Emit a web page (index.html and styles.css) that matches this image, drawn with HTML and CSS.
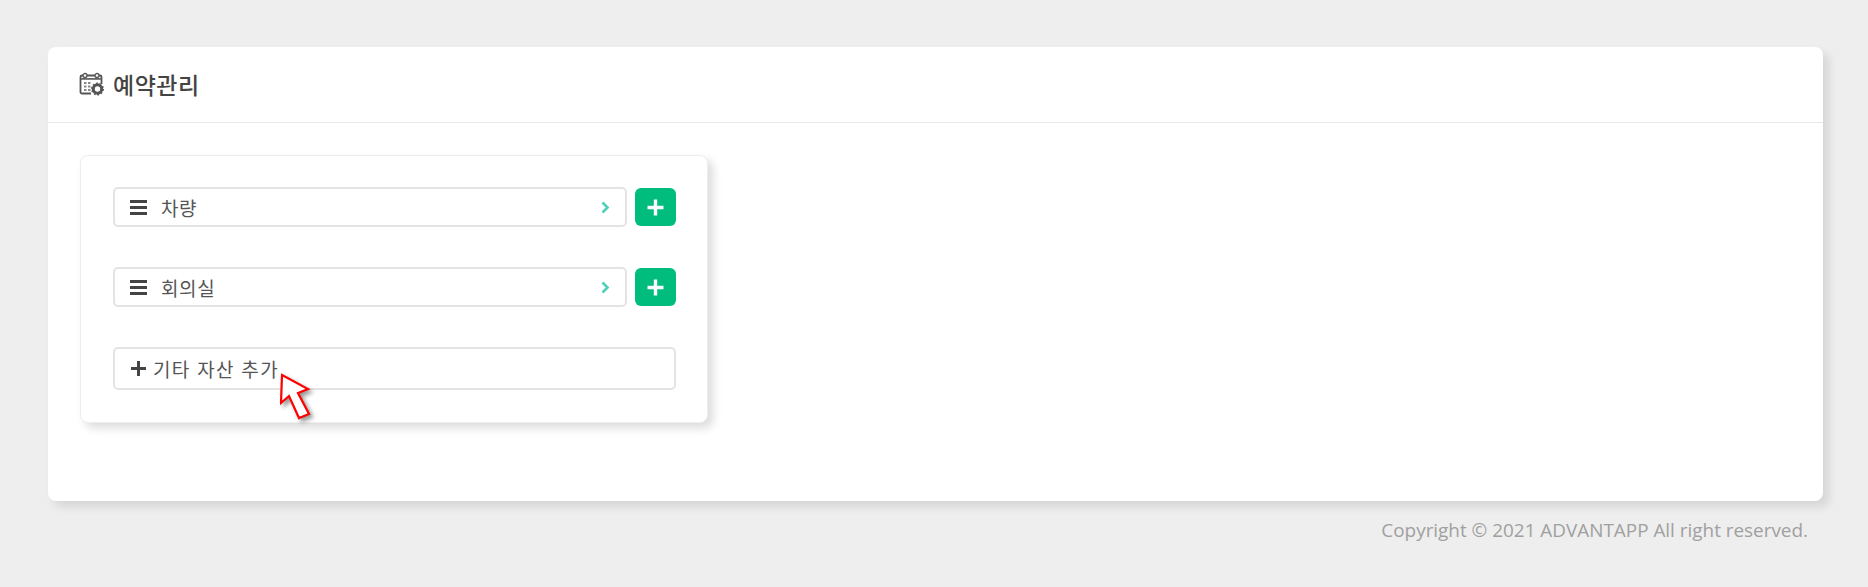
FILE: index.html
```html
<!DOCTYPE html>
<html lang="ko">
<head>
  <meta charset="UTF-8" />
  <meta name="viewport" content="width=device-width, initial-scale=1.0" />
  <title>예약관리</title>
  <link rel="stylesheet" href="styles.css">
</head>
<body>

  <section class="panel">
    <header class="panel-head">
      <svg class="cal-icon" width="26" height="24" viewBox="0 0 26 24">
        <path d="M3 3.500h18a1.500 1.500 0 0 1 1.500 1.500v7M12 21.500H3A1.500 1.500 0 0 1 1.500 20V5A1.500 1.500 0 0 1 3 3.500" fill="none" stroke="#555" stroke-width="1.800"/>
        <rect x="2" y="6" width="20" height="1.800" fill="#666"/>
        <circle cx="6" cy="3.500" r="2" fill="#fff" stroke="#555" stroke-width="1.300"/>
        <circle cx="18" cy="3.500" r="2" fill="#fff" stroke="#555" stroke-width="1.300"/>
        <path d="M5 10h2.500v2H5zM9 10h2.500v2H9zM5 13.500h2.500v2H5zM9 13.500h2.500v2H9zM5 17h2.500v2H5zM9 17h2.500v2H9z" fill="#888"/>
        <circle cx="18.500" cy="17" r="4.200" fill="#fff" stroke="#555" stroke-width="3"/>
        <circle cx="18.500" cy="17" r="5.800" fill="none" stroke="#555" stroke-width="1.400" stroke-dasharray="1.800 1.800"/>
      </svg>
      <h1>예약관리</h1>
    </header>

    <div class="panel-body">
      <div class="card">
        <div class="row">
          <div class="asset">
            <span class="bars"><i></i><i></i><i></i></span>
            <span class="asset-name">차량</span>
            <svg class="chev" width="9" height="13" viewBox="0 0 9 13"><path d="M1.500 1.500 6.500 6.500l-5 5" fill="none" stroke="#4fd0b8" stroke-width="2.600"/></svg>
          </div>
          <button class="btn-add" type="button"><svg width="19" height="19" viewBox="0 0 19 19"><path d="M9.500 1.500v16M1.500 9.500h16" stroke="#fff" stroke-width="3.400"/></svg></button>
        </div>

        <div class="row">
          <div class="asset">
            <span class="bars"><i></i><i></i><i></i></span>
            <span class="asset-name">회의실</span>
            <svg class="chev" width="9" height="13" viewBox="0 0 9 13"><path d="M1.500 1.500 6.500 6.500l-5 5" fill="none" stroke="#4fd0b8" stroke-width="2.600"/></svg>
          </div>
          <button class="btn-add" type="button"><svg width="19" height="19" viewBox="0 0 19 19"><path d="M9.500 1.500v16M1.500 9.500h16" stroke="#fff" stroke-width="3.400"/></svg></button>
        </div>

        <div class="add-other">
          <svg width="17" height="17" viewBox="0 0 17 17"><path d="M8.500 1v15M1 8.500h15" stroke="#444" stroke-width="3"/></svg>
          <span>기타 자산 추가</span>
        </div>

        <svg class="cursor" width="38" height="54" viewBox="0 0 38 54">
          <path d="M2 2 28 16l-10 4 11 21-10 4-10-22-8 7z" fill="#fff" stroke="#f00" stroke-width="2.200" stroke-linejoin="miter"/>
        </svg>
      </div>
    </div>
  </section>

  <footer class="copy">Copyright © 2021 ADVANTAPP All right reserved.</footer>

</body>
</html>
```

FILE: styles.css
```css
body {
  font-family: "Noto Sans CJK KR", "Open Sans", sans-serif;
  background-color: #eeeeee;
  margin: 0;
  padding: 47px 45px 0 48px;
  color: #444;
}

.panel {
  background-color: white;
  border-radius: 8px;
  height: 454px;
  box-shadow: 6px 6px 10px rgba(0,0,0,0.1);
}

.panel-head {
  display: flex;
  align-items: center;
  gap: 8px;
  height: 73px;
  padding: 0 0 2px 31px;
  border-bottom: 1px solid #e8e8e8;
}

.panel-head h1 {
  font-size: 23px;
  font-weight: 500;
  letter-spacing: 0.5px;
  margin: 0;
  color: #444;
}

.panel-body {
  padding: 32px;
}

.card {
  position: relative;
  width: 563px;
  padding: 31px 31px 32px 32px;
  display: flex;
  flex-direction: column;
  gap: 40px;
  background-color: white;
  border: 1px solid #eeeeee;
  border-radius: 8px;
  box-shadow: 5px 5px 10px rgba(0,0,0,0.14);
}

.row {
  display: flex;
  align-items: center;
  gap: 8px;
}

.asset {
  flex: 1;
  display: flex;
  align-items: center;
  height: 40px;
  box-sizing: border-box;
  padding: 0 15px;
  border: 2px solid #e4e4e4;
  border-radius: 5px;
}

.bars {
  display: flex;
  flex-direction: column;
  gap: 3px;
  width: 17px;
  margin-right: 14px;
}

.bars i {
  display: block;
  height: 3px;
  background-color: #444;
}

.asset-name {
  flex: 1;
  font-size: 19px;
  letter-spacing: 0.6px;
  color: #555;
}

.btn-add {
  display: flex;
  align-items: center;
  justify-content: center;
  width: 41px;
  height: 38px;
  padding: 0;
  border: none;
  border-radius: 6px;
  background-color: #00bc7d;
}

.add-other {
  display: flex;
  align-items: center;
  gap: 6px;
  height: 43px;
  box-sizing: border-box;
  padding-left: 15px;
  border: 2px solid #e4e4e4;
  border-radius: 5px;
  font-size: 19px;
  letter-spacing: 1.3px;
  color: #555;
}

.cursor {
  position: absolute;
  left: 199px;
  top: 217px;
  filter: drop-shadow(3px 3px 2px rgba(0,0,0,0.4));
}

.copy {
  margin-top: 16px;
  padding-right: 15px;
  text-align: right;
  font-family: "Open Sans", sans-serif;
  font-size: 18.9px;
  color: #a0a0a0;
}
```
